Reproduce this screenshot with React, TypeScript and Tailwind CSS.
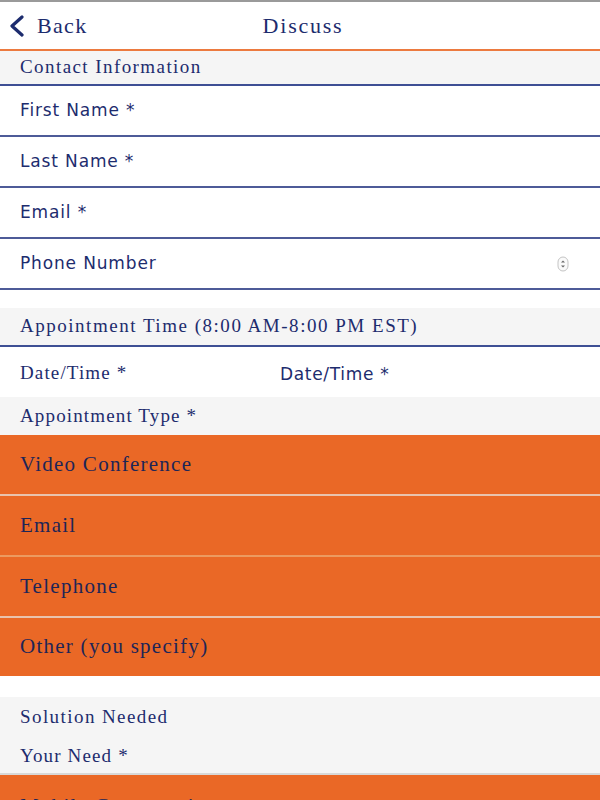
const serif = "font-['Liberation_Serif',serif]";
const sans = "font-['DejaVu_Sans',sans-serif]";

function InputRow({ label, stepper }: { label: string; stepper?: boolean }) {
  return (
    <div className="flex h-[51px] items-center justify-between border-b-2 border-[#4d5b98] bg-white pl-5 pr-[31px]">
      <span className={`${sans} text-[17px] tracking-[0.05em] text-[#1d2c6e]`}>{label}</span>
      {stepper && (
        <svg width="12" height="16" viewBox="0 0 12 16">
          <rect x="1" y="1" width="10" height="14" rx="5" fill="#fafafa" stroke="#c4c4c4" />
          <path d="M4 6.5 L6 4.5 L8 6.5 Z" fill="#666" />
          <path d="M4 9.5 L6 11.5 L8 9.5 Z" fill="#666" />
        </svg>
      )}
    </div>
  );
}

function Option({ label, h }: { label: string; h: string }) {
  return (
    <div className={`flex ${h} items-center bg-[#ea6826] pl-5`}>
      <span className={`${serif} text-[21px] tracking-[0.06em] text-[#1d2557]`}>{label}</span>
    </div>
  );
}

export default function App() {
  return (
    <div className="h-[800px] w-[600px] overflow-hidden border-t-2 border-[#9a9a9a] bg-white">
      {/* nav bar */}
      <div className="relative flex h-[49px] items-center border-b-2 border-[#ec7a3f] bg-white">
        <div className="relative z-10 flex items-center pl-[8px]">
          <svg width="18" height="22" viewBox="0 0 18 22" className="text-[#1d2c6e]">
            <path d="M14 2 L4 11 L14 20" fill="none" stroke="currentColor" strokeWidth="3.2" strokeLinecap="round" strokeLinejoin="round" />
          </svg>
          <span className={`${serif} ml-[11px] text-[22px] tracking-[0.06em] text-[#1d2c6e]`}>Back</span>
        </div>
        <div className="absolute inset-0 flex items-center justify-center pl-[6px]">
          <span className={`${serif} text-[22px] tracking-[0.08em] text-[#1d2c6e]`}>Discuss</span>
        </div>
      </div>

      <div className="flex h-[35px] items-center border-b-2 border-[#3e4f94] bg-[#f5f5f5] pl-5">
        <span className={`${serif} text-[19px] tracking-[0.075em] text-[#1d2c6e]`}>Contact Information</span>
      </div>
      <InputRow label="First Name *" />
      <InputRow label="Last Name *" />
      <InputRow label="Email *" />
      <InputRow label="Phone Number" stepper />

      <div className="h-[18px] bg-white" />

      <div className="flex h-[39px] items-center border-b-2 border-[#3e4f94] bg-[#f5f5f5] pl-5">
        <span className={`${serif} text-[19px] tracking-[0.08em] text-[#1d2c6e]`}>
          Appointment Time (8:00 AM-8:00 PM EST)
        </span>
      </div>
      <div className="flex h-[50px] items-start bg-white pl-5 pt-[12px]">
        <span className={`${serif} w-[260px] text-[19px] tracking-[0.06em] text-[#1d2c6e]`}>Date/Time *</span>
        <span className={`${sans} mt-[3px] text-[17px] tracking-[0.04em] text-[#1d2c6e]`}>Date/Time *</span>
      </div>
      <div className="flex h-[38px] items-center bg-[#f5f5f5] pl-5">
        <span className={`${serif} text-[19px] tracking-[0.06em] text-[#1d2c6e]`}>Appointment Type *</span>
      </div>

      <div className="flex flex-col">
        <Option label="Video Conference" h="h-[61px] border-b-2 border-[#e9c3ad]" />
        <Option label="Email" h="h-[61px] border-b-2 border-[#ec9a60]" />
        <Option label="Telephone" h="h-[61px] border-b-2 border-[#e9c3ad]" />
        <Option label="Other (you specify)" h="h-[58px]" />
      </div>

      <div className="h-[21px] bg-white" />

      <div className="flex h-[78px] flex-col justify-center gap-[11px] border-b-2 border-[#d8d8d8] bg-[#f5f5f5] pl-5 pt-[3px]">
        <span className={`${serif} text-[19px] tracking-[0.075em] text-[#1d2c6e]`}>Solution Needed</span>
        <span className={`${serif} text-[19px] tracking-[0.06em] text-[#1d2c6e]`}>Your Need *</span>
      </div>
      <div className="flex h-[61px] items-start bg-[#ea6826] pl-5 pt-[16px]">
        <span className={`${serif} text-[21px] tracking-[0.06em] text-[#1d2557]`}>Mobile Construction</span>
      </div>
    </div>
  );
}
